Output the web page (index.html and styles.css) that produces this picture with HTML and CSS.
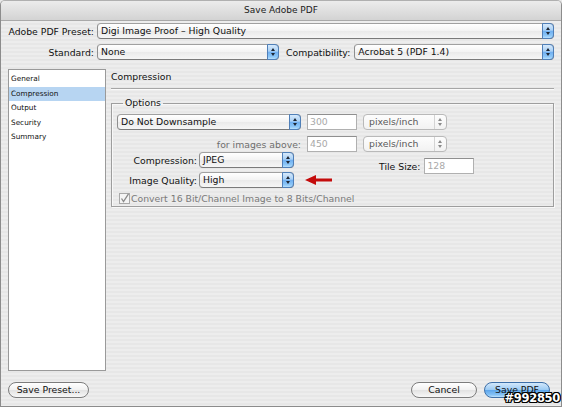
FILE: index.html
```html
<!DOCTYPE html>
<html>
<head>
<meta charset="utf-8">
<title>Save Adobe PDF</title>
<link rel="stylesheet" href="styles.css">
</head>
<body>
<div class="window">
  <div class="titlebar">Save Adobe PDF</div>

  <div class="toprow row1">
    <span class="lbl">Adobe PDF Preset:</span>
    <div class="popup grow"><span class="ptext">Digi Image Proof – High Quality</span><i class="step"></i></div>
  </div>
  <div class="toprow row2">
    <span class="lbl">Standard:</span>
    <div class="popup std"><span class="ptext">None</span><i class="step"></i></div>
    <span class="lbl2">Compatibility:</span>
    <div class="popup grow"><span class="ptext">Acrobat 5 (PDF 1.4)</span><i class="step"></i></div>
  </div>

  <div class="main">
    <ul class="sidebar">
      <li>General</li>
      <li class="sel">Compression</li>
      <li>Output</li>
      <li>Security</li>
      <li>Summary</li>
    </ul>
    <div class="panel">
      <div class="heading">Compression</div>
      <fieldset class="group">
        <legend>Options</legend>
        <div class="orow">
          <div class="popup wide"><span class="ptext">Do Not Downsample</span><i class="step"></i></div>
          <div class="field">300</div>
          <div class="popup dis unit"><span class="ptext">pixels/inch</span><i class="step"></i></div>
        </div>
        <div class="orow rowb">
          <span class="above">for images above:</span>
          <div class="field">450</div>
          <div class="popup dis unit"><span class="ptext">pixels/inch</span><i class="step"></i></div>
        </div>
        <div class="rowcd">
          <div class="stack">
            <div class="lrow">
              <span class="olbl">Compression:</span>
              <div class="popup mid"><span class="ptext">JPEG</span><i class="step"></i></div>
            </div>
            <div class="lrow">
              <span class="olbl">Image Quality:</span>
              <div class="popup mid"><span class="ptext">High</span><i class="step"></i></div>
              <svg class="arrow" width="28" height="10" viewBox="0 0 28 10"><polygon points="0,5 11,0 11,3.5 27,3.5 27,6.5 11,6.5 11,10" fill="#c40c0c"/></svg>
            </div>
          </div>
          <div class="tile">
            <span class="tlbl">Tile Size:</span>
            <div class="field tf">128</div>
          </div>
        </div>
        <div class="crow">
          <svg class="check" width="11" height="11" viewBox="0 0 11 11"><rect x="0.5" y="0.5" width="10" height="10" fill="#f4f4f4" stroke="#a8a8a8"/><path d="M2.5 5.5 L4.5 8.5 L9.5 0.8" fill="none" stroke="#8a8a8a" stroke-width="1.3"/></svg>
          <span class="ctext">Convert 16 Bit/Channel Image to 8 Bits/Channel</span>
        </div>
      </fieldset>
    </div>
  </div>

  <div class="footer">
    <div class="btn preset">Save Preset...</div>
    <div class="right">
      <div class="btn cancel">Cancel</div>
      <div class="btn primary">Save PDF</div>
    </div>
  </div>

  <div class="watermark">#992850</div>
</div>
</body>
</html>
```

FILE: styles.css
```css
* { box-sizing: border-box; }
html, body { margin: 0; padding: 0; }
body {
  font-family: "DejaVu Sans", sans-serif;
  font-size: 9.3px;
  color: #111;
  background: #e8e8e8;
}
.window {
  position: relative;
  width: 562px;
  height: 407px;
  border: 1px solid #8c8c8c;
  border-top-color: #b0b0b0;
  border-radius: 5px 5px 0 0;
  overflow: hidden;
  background: repeating-linear-gradient(to bottom, #ededed 0, #ededed 2px, #e7e7e7 2px, #e7e7e7 4px);
}
.titlebar {
  height: 20px;
  line-height: 19px;
  text-align: center;
  font-size: 9px;
  color: #1a1a1a;
  background: linear-gradient(#ececec, #d3d3d3);
  border-bottom: 1px solid #a9a9a9;
}
.toprow {
  display: flex;
  align-items: center;
  height: 16px;
  padding: 0 7px 0 7px;
}
.row1 { margin-top: 2px; }
.row2 { margin-top: 5px; }
.lbl {
  width: 86px;
  text-align: right;
  margin-right: 3px;
  white-space: nowrap;
}
.lbl2 { margin: 0 4px 0 7px; white-space: nowrap; }

.popup {
  display: flex;
  align-items: center;
  flex-shrink: 0;
  height: 16px;
  border: 1px solid #8e8e8e;
  border-top-color: #a0a0a0;
  border-bottom-color: #7a7a7a;
  border-radius: 4px;
  background: linear-gradient(#ffffff, #f3f3f3 50%, #eaeaea 51%, #f6f6f6);
  white-space: nowrap;
}
.popup .ptext { flex: 1; padding-left: 3px; line-height: 14px; overflow: hidden; }
.popup .step {
  position: relative;
  align-self: stretch;
  width: 12px;
  margin: -1px -1px -1px 0;
  border: 1px solid #4f7fb8;
  border-radius: 0 4px 4px 0;
  background: linear-gradient(#d6e9fb, #a9d0f5 45%, #6eaef0 50%, #8ec8f8 85%, #b9e0fd);
}
.popup .step::before, .popup .step::after {
  content: "";
  position: absolute;
  left: 3px;
  border-left: 2.5px solid transparent;
  border-right: 2.5px solid transparent;
}
.popup .step::before { top: 3px; border-bottom: 3px solid #1d2633; }
.popup .step::after { top: 8px; border-top: 3px solid #1d2633; }
.grow { flex: 1; }
.std { width: 182px; }

.popup.dis { border-color: #b9b9b9; color: #5a5a5a; background: linear-gradient(#fdfdfd, #f2f2f2); }
.popup.dis .ptext { padding-left: 5px; }
.popup.dis .step {
  border: none;
  border-left: 1px solid #d4d4d4;
  margin: 0;
  background: transparent;
}
.popup.dis .step::before { border-bottom-color: #8a8a8a; }
.popup.dis .step::after { border-top-color: #8a8a8a; }

.main {
  display: flex;
  margin-top: 9px;
  padding: 0 7px;
  height: 302px;
}
.sidebar {
  list-style: none;
  margin: 0;
  padding: 2px 0 0 0;
  width: 98px;
  height: 302px;
  background: #fff;
  border: 1px solid #9a9a9a;
  font-size: 7.3px;
}
.sidebar li { height: 14.6px; line-height: 14.6px; padding-left: 2px; }
.sidebar li.sel { background: #b7d5f2; }

.panel { flex: 1; margin-left: 5px; }
.heading {
  height: 20px;
  padding-top: 1px;
  line-height: 14px;
  font-size: 9.3px;
  border-bottom: 1px solid #a6a6a6;
  box-shadow: 0 1px 0 #fafafa;
}
.group {
  margin: 8px 0 0 0;
  padding: 5px 5px 6px 5px;
  border: 1px solid #9e9e9e;
  box-shadow: inset 1px 1px 0 #f8f8f8, 1px 1px 0 #f8f8f8;
  height: 110px;
}
.group legend {
  padding: 0 2px;
  margin-left: 6px;
  line-height: 12px;
  font-size: 9.3px;
}
.orow { display: flex; align-items: center; gap: 6px; }
.rowb { margin-top: 6px; }
.wide { width: 184px; }
.unit { width: 84px; }
.field {
  flex-shrink: 0;
  width: 50px;
  height: 16px;
  line-height: 14px;
  padding-left: 2px;
  background: #fff;
  border: 1px solid #b0b0b0;
  border-top-color: #8f8f8f;
  color: #a9a9a9;
}
.above { width: 184px; text-align: right; color: #6e6e6e; }

.rowcd { display: flex; margin-top: 0; }
.stack { width: 184px; flex-shrink: 0; display: flex; flex-direction: column; gap: 4px; }
.lrow { display: flex; align-items: center; }
.olbl { width: 80px; flex-shrink: 0; text-align: right; margin-right: 2px; white-space: nowrap; }
.mid { width: 95px; }
.arrow { flex-shrink: 0; margin-left: 11px; margin-right: -60px; }
.tile { display: flex; align-items: center; margin-left: 78px; margin-top: 6px; align-self: flex-start; }
.tlbl { margin-right: 4px; }
.crow { display: flex; align-items: center; margin-top: 5px; padding-left: 2px; color: #7a7a7a; }
.check { margin-right: 1px; }

.footer {
  display: flex;
  justify-content: space-between;
  padding: 0 11px 0 7px;
  margin-top: 11px;
}
.right { display: flex; gap: 7px; }
.btn {
  height: 16px;
  line-height: 14px;
  border: 1px solid #7c7c7c;
  border-radius: 8px;
  text-align: center;
  background: linear-gradient(#ffffff, #f1f1f1 50%, #e2e2e2 51%, #f7f7f7);
  white-space: nowrap;
}
.preset { width: 81px; }
.cancel { width: 66px; }
.primary {
  width: 66px;
  border-color: #3d6fa8;
  background: linear-gradient(#d3e8fb, #9ccbf4 48%, #5ea6ec 52%, #86c3f6 85%, #bfe2fd);
}
.watermark {
  position: absolute;
  right: 1px;
  bottom: 1px;
  font-family: "DejaVu Sans", sans-serif;
  font-weight: bold;
  font-size: 11.5px;
  color: #fff;
  letter-spacing: -0.3px;
  text-shadow: -1px 0 #000, 1px 0 #000, 0 -1px #000, 0 1px #000, -1px -1px #000, 1px 1px #000, -1px 1px #000, 1px -1px #000;
}
```
